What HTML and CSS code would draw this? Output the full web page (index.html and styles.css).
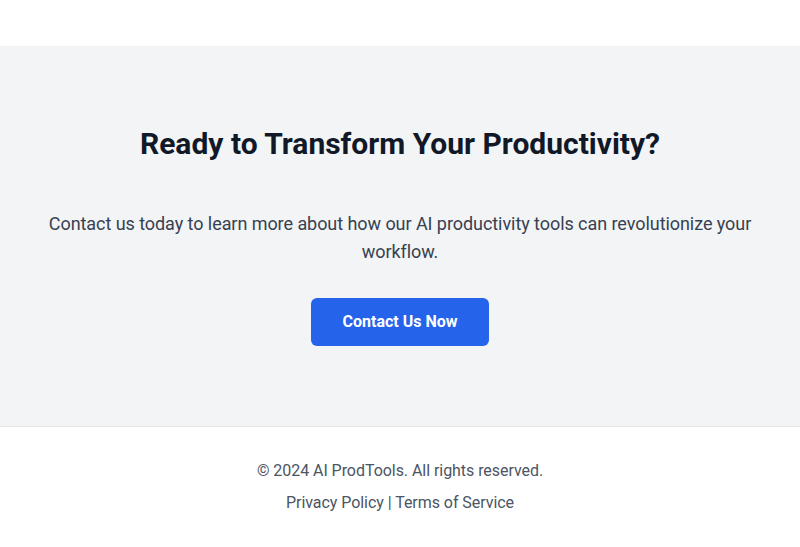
FILE: index.html
```html
<!DOCTYPE html>
<html lang="en">
<head>
<meta charset="utf-8">
<title>AI ProdTools</title>
<link rel="stylesheet" href="styles.css">
</head>
<body>
<div class="top-space"></div>
<section class="cta">
  <h2 class="cta-title">Ready to Transform Your Productivity?</h2>
  <p class="cta-text">Contact us today to learn more about how our AI productivity tools can revolutionize your workflow.</p>
  <a class="cta-button" href="#">Contact Us Now</a>
</section>
<footer class="footer">
  <p class="footer-copy">© 2024 AI ProdTools. All rights reserved.</p>
  <p class="footer-links"><a href="#">Privacy Policy</a> | <a href="#">Terms of Service</a></p>
</footer>
</body>
</html>
```
FILE: styles.css
```css
* { box-sizing: border-box; }
html, body { margin: 0; padding: 0; background: #ffffff; }
body { font-family: Roboto, "Liberation Sans", sans-serif; color: #111827; }
.top-space { height: 46px; }
.cta {
  background: #f3f4f6;
  padding: 80px 16px 80px;
  display: flex;
  flex-direction: column;
  align-items: center;
  text-align: center;
}
.cta-title {
  margin: 0 0 48px;
  font-size: 30px;
  line-height: 36px;
  font-weight: 700;
  color: #111827;
}
.cta-text {
  margin: 0 0 32px;
  font-size: 18px;
  line-height: 28px;
  letter-spacing: -0.06px;
  color: #374151;
}
.cta-button {
  display: inline-block;
  background: #2563eb;
  color: #ffffff;
  font-size: 16px;
  line-height: 24px;
  font-weight: 700;
  padding: 12px 32px;
  border-radius: 6px;
  text-decoration: none;
}
.footer {
  border-top: 1px solid #e5e7eb;
  padding: 32px 16px 32px;
  text-align: center;
  color: #4b5563;
  font-size: 16px;
  line-height: 24px;
  letter-spacing: -0.05px;
}
.footer p { margin: 0; }
.footer-links { margin-top: 8px !important; }
.footer-links a { color: #4b5563; text-decoration: none; }
```
